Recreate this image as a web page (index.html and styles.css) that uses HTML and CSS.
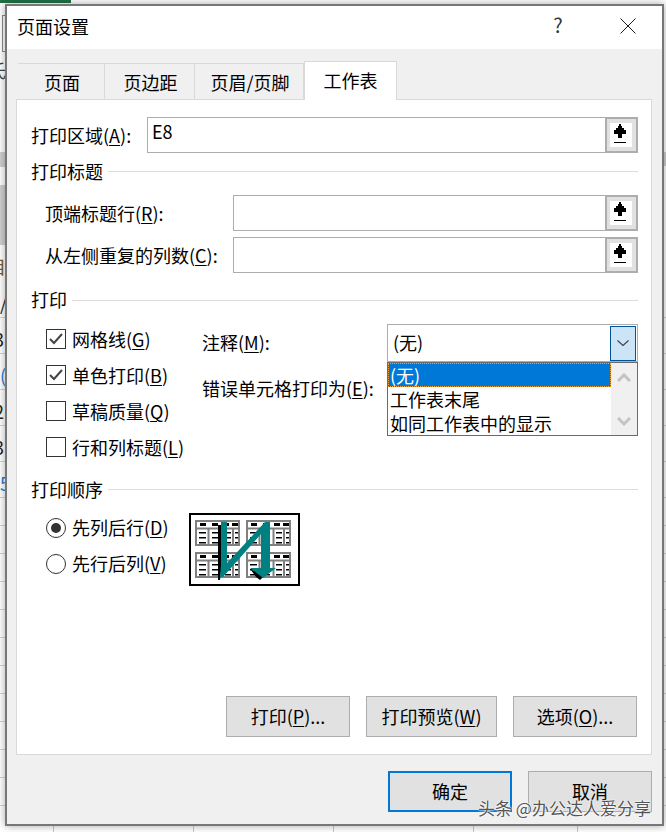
FILE: index.html
```html
<!DOCTYPE html>
<html lang="zh-CN">
<head>
<meta charset="utf-8">
<title>页面设置</title>
<link rel="stylesheet" href="styles.css">
</head>
<body>
<svg class="defs" width="0" height="0" aria-hidden="true">
  <symbol id="refedit" viewBox="0 0 33 36">
    <rect x="1" y="1" width="31" height="34" fill="#e1e1e1" stroke="#adadad" stroke-width="2"/>
    <rect x="5" y="6" width="22" height="24" fill="#fff"/>
    <path d="M14 7h2v2h1v2h2v2h2v4h-4v4h-4v-4H9v-4h2v-2h2V9h1z" fill="#000" shape-rendering="crispEdges"/>
    <rect x="9" y="25" width="12" height="1" fill="#000"/>
  </symbol>
  <symbol id="minitable" viewBox="0 0 45 26">
    <rect x="1" y="1" width="43" height="24" fill="#fff" stroke="#808080" stroke-width="2"/>
    <path d="M1 8.500h43M13.500 8v17M27.500 8v17M38 8v17" stroke="#808080" stroke-width="2" fill="none"/>
    <path d="M5 3h6v3H5zM17 3h6v3h-6zM28 3h6v3h-6zM37 3h6v3h-6z" fill="#000"/>
    <path d="M4 12h7v1.500H4zM4 17h7v1.500H4zM4 22h7v1.500H4zM17 12h7v1.500h-7zM17 17h7v1.500h-7zM17 22h7v1.500h-7zM30 12h6v1.500h-6zM30 17h6v1.500h-6zM30 22h6v1.500h-6zM40 12h3v1.500h-3zM40 17h3v1.500h-3zM40 22h3v1.500h-3z" fill="#000"/>
  </symbol>
</svg>

<div class="sheet">
  <div class="sheet-green"></div>
  <div class="sheet-box"></div>
  <div class="sheet-char">氏</div>
  <div class="sheet-char cell-char">目</div>
  <div class="sheet-band band-a"></div>
  <div class="sheet-band band-b"></div>
  <div class="sheet-band band-c"></div>
  <div class="sheet-rows">
    <div class="sheet-row"><span class="frag">/</span></div>
    <div class="sheet-row"><span class="frag cut">3</span></div>
    <div class="sheet-row"><span class="frag blue">(</span></div>
    <div class="sheet-row"><span class="frag cut">2</span></div>
    <div class="sheet-row"><span class="frag cut">3</span></div>
    <div class="sheet-row"><span class="frag blue">5/</span></div>
    <div class="sheet-row low"></div><div class="sheet-row low"></div><div class="sheet-row low"></div><div class="sheet-row low"></div><div class="sheet-row low"></div><div class="sheet-row low"></div><div class="sheet-row low"></div><div class="sheet-row low"></div><div class="sheet-row low"></div><div class="sheet-row low"></div><div class="sheet-row low"></div>
  </div>
  <div class="sheet-foot">
    <span class="foot-cell"></span><span class="foot-cell"></span><span class="foot-cell"></span><span class="foot-cell wide"></span><span class="foot-cell"></span><span class="foot-cell"></span>
  </div>
</div>

<div class="dialog">
  <div class="titlebar">
    <span class="title">页面设置</span>
    <span class="help">?</span>
    <svg class="close" width="16" height="16" viewBox="0 0 16 16"><path d="M.5.500l15 15M15.500.500l-15 15" stroke="#1a1a1a" stroke-width="1" fill="none"/></svg>
  </div>
  <div class="body">
    <div class="tabs">
      <div class="tab t1">页面</div>
      <div class="tab t2">页边距</div>
      <div class="tab t3">页眉/页脚</div>
      <div class="tab active">工作表</div>
    </div>
    <div class="panel">
      <div class="field-row">
        <span class="area-label">打印区域(<u>A</u>):</span>
        <div class="input"><span class="input-text">E8</span><svg class="refedit"><use href="#refedit"/></svg></div>
      </div>
      <div class="heading"><span>打印标题</span><i></i></div>
      <div class="field-row sub">
        <span class="title-label">顶端标题行(<u>R</u>):</span>
        <div class="input"><span class="input-text"></span><svg class="refedit"><use href="#refedit"/></svg></div>
      </div>
      <div class="field-row sub second">
        <span class="title-label">从左侧重复的列数(<u>C</u>):</span>
        <div class="input"><span class="input-text"></span><svg class="refedit"><use href="#refedit"/></svg></div>
      </div>
      <div class="heading print-head"><span>打印</span><i></i></div>
      <div class="print-grid">
        <div class="checks">
          <label class="check"><span class="box"><svg width="18" height="18" viewBox="0 0 18 18"><path d="M3 9l4 4 8-9" stroke="#444" stroke-width="2" fill="none"/></svg></span><span>网格线(<u>G</u>)</span></label>
          <label class="check"><span class="box"><svg width="18" height="18" viewBox="0 0 18 18"><path d="M3 9l4 4 8-9" stroke="#444" stroke-width="2" fill="none"/></svg></span><span>单色打印(<u>B</u>)</span></label>
          <label class="check"><span class="box"></span><span>草稿质量(<u>Q</u>)</span></label>
          <label class="check"><span class="box"></span><span>行和列标题(<u>L</u>)</span></label>
        </div>
        <div class="mid-labels">
          <span>注释(<u>M</u>):</span>
          <span>错误单元格打印为(<u>E</u>):</span>
        </div>
        <div class="combo">
          <span class="combo-text">(无)</span>
          <span class="combo-btn"><svg width="12" height="6" viewBox="0 0 12 6"><path d="M.5.500L6 5.500l5.500-5" stroke="#444" stroke-width="1.200" fill="none"/></svg></span>
          <div class="droplist">
            <div class="options">
              <div class="option selected">(无)</div>
              <div class="option">工作表末尾</div>
              <div class="option">如同工作表中的显示</div>
            </div>
            <div class="scroll">
              <svg width="14" height="9" viewBox="0 0 14 9"><path d="M1 8l6-6 6 6" stroke="#c4c4c4" stroke-width="3" fill="none"/></svg>
              <svg width="14" height="9" viewBox="0 0 14 9"><path d="M1 1l6 6 6-6" stroke="#c4c4c4" stroke-width="3" fill="none"/></svg>
            </div>
          </div>
        </div>
      </div>
      <div class="heading order-head"><span>打印顺序</span><i></i></div>
      <div class="order-row">
        <div class="radios">
          <label class="radio"><span class="dot on"></span><span>先列后行(<u>D</u>)</span></label>
          <label class="radio"><span class="dot"></span><span>先行后列(<u>V</u>)</span></label>
        </div>
        <svg class="order-pic" width="111" height="73" viewBox="0 0 111 73">
          <rect x="1" y="1" width="109" height="71" fill="#fff" stroke="#000" stroke-width="2"/>
          <use href="#minitable" x="6" y="7" width="45" height="26"/>
          <use href="#minitable" x="57" y="7" width="45" height="26"/>
          <use href="#minitable" x="6" y="39" width="45" height="26"/>
          <use href="#minitable" x="57" y="39" width="45" height="26"/>
          <path d="M29 12h3v47l-1 8h-2z" fill="#000"/>
          <path d="M72 18h4v42h-4zM62 57l5 1 7 6-3 3-4-3z" fill="#000"/>
          <path d="M32 9h6v41L76 9h5v46h6L74 65 61 55h11V21L34 64h-3l1-12z" fill="#008080"/>
        </svg>
      </div>
      <div class="panel-actions">
        <button class="btn">打印(<u>P</u>)...</button>
        <button class="btn preview">打印预览(<u>W</u>)</button>
        <button class="btn">选项(<u>O</u>)...</button>
      </div>
    </div>
    <div class="footer">
      <button class="btn default">确定</button>
      <button class="btn">取消</button>
    </div>
  </div>
</div>
<div class="watermark">头条 @办公达人爱分享</div>
</body>
</html>
```
FILE: styles.css
```css
* { box-sizing: border-box; }
html, body { margin: 0; padding: 0; }
body {
  width: 666px;
  height: 832px;
  overflow: hidden;
  position: relative;
  background: #fff;
  font-family: "Noto Sans CJK SC", "Noto Sans", sans-serif;
  font-size: 18px;
  color: #000;
}
u { text-underline-offset: 2px; text-decoration-thickness: 1px; }
.defs { position: absolute; }

/* spreadsheet behind the dialog */
.sheet { position: absolute; inset: 0; overflow: hidden; }
.sheet-green { position: absolute; left: 0; top: 0; width: 71px; height: 3px; background: #217346; }
.sheet-box { position: absolute; left: 2px; top: 15px; width: 6px; height: 37px; border: 1px solid #8a8a8a; }
.sheet-char { position: absolute; left: -12px; top: 58px; font-size: 18px; line-height: 24px; color: #444; }
.cell-char { top: 254px; color: #7a5a20; }
.sheet-band { position: absolute; background: #d0d0d0; }
.band-a { left: 0; top: 152px; width: 8px; height: 15px; }
.band-b { left: 0; top: 185px; width: 8px; height: 60px; }
.band-c { right: 0; top: 152px; width: 8px; height: 14px; }
.sheet-rows { position: absolute; left: 0; right: 0; top: 282px; display: flex; flex-direction: column; }
.sheet-row { height: 36px; border-bottom: 1px solid #d4d4d4; padding-top: 9px; line-height: 24px; color: #222; }
.sheet-row.low { height: 28px; padding-top: 0; }
.frag { display: block; }
.frag.cut { margin-left: -6px; }
.frag.blue { color: #1f7fd0; }
.sheet-foot { position: absolute; left: 0; right: 0; top: 826px; height: 6px; display: flex; padding-left: 53px; }
.foot-cell { width: 140px; height: 6px; border-left: 1px solid #c8c8c8; flex: none; }
.foot-cell.wide { width: 104px; }

/* dialog window */
.dialog {
  position: absolute;
  left: 5px;
  top: 4px;
  width: 659px;
  height: 822px;
  border: 2px solid #777;
  background: #f0f0f0;
  display: flex;
  flex-direction: column;
  box-shadow: 0 0 8px rgba(0, 0, 0, .35);
}
.titlebar {
  height: 43px;
  flex: none;
  background: #fff;
  display: flex;
  align-items: center;
  padding-left: 10px;
}
.title { line-height: 24px; padding-bottom: 4px; flex: 1; }
.help { width: 20px; text-align: center; font-size: 20px; line-height: 24px; padding-bottom: 6px; color: #333; margin-right: 52px; }
.close { margin-right: 26px; margin-top: -4px; }

.body { flex: 1; display: flex; flex-direction: column; min-height: 0; }
.tabs { display: flex; align-items: flex-end; height: 38px; margin: 12px 0 0 11px; position: relative; z-index: 1; }
.tab {
  height: 36px;
  background: #f0f0f0;
  border-top: 1px solid #d9d9d9;
  border-right: 1px solid #d9d9d9;
  display: flex;
  align-items: center;
  justify-content: center;
  padding: 1px 0 0 2px;
}
.t1 { width: 87px; }
.t2 { width: 90px; }
.t3 { width: 109px; }
.tab.active {
  width: 93px;
  height: 39px;
  margin-bottom: -1px;
  background: #fff;
  border: 1px solid #d9d9d9;
  border-bottom: none;
  padding: 0 0 3px 0;
}
.panel {
  width: 636px;
  height: 656px;
  flex: none;
  margin-left: 9px;
  background: #fff;
  border: 1px solid #d9d9d9;
  padding: 17px 13px 17px 14px;
  display: flex;
  flex-direction: column;
}
.field-row { display: flex; align-items: center; height: 36px; }
.field-row.sub { padding-left: 14px; }
.field-row.second { margin-top: 6px; }
.area-label { width: 116px; padding-bottom: 1px; }
.title-label { width: 188px; padding-bottom: 1px; }
.input {
  flex: 1;
  height: 36px;
  border: 1px solid #adadad;
  border-right: none;
  display: flex;
  align-items: stretch;
  position: relative;
}
.input-text { flex: 1; padding: 0 0 8px 4px; line-height: 27px; }
.refedit { width: 33px; height: 36px; margin: -1px 0; flex: none; }

.heading { display: flex; align-items: center; height: 24px; margin-top: 6px; margin-bottom: 12px; }
.heading span { flex: none; margin-right: 5px; }
.heading i { flex: 1; height: 1px; background: #dcdcdc; }
.print-head { margin-top: 15px; margin-bottom: 12px; }
.print-head span { padding-bottom: 2px; }
.order-head { margin-top: 0; margin-bottom: 12px; }

.print-grid { display: flex; height: 153px; }
.checks { width: 171px; padding: 5px 0 0 15px; display: flex; flex-direction: column; gap: 16px; }
.check { display: flex; align-items: center; gap: 6px; height: 20px; white-space: nowrap; }
.box { width: 20px; height: 20px; border: 1px solid #333; flex: none; display: flex; align-items: center; justify-content: center; }
.mid-labels { width: 185px; padding-top: 6px; display: flex; flex-direction: column; gap: 22px; line-height: 24px; white-space: nowrap; }

.combo {
  width: 251px;
  height: 38px;
  border: 1px solid #adadad;
  position: relative;
  display: flex;
  align-items: center;
  padding-left: 5px;
}
.combo-text { flex: 1; padding-bottom: 2px; }
.combo-btn {
  width: 26px;
  height: 35px;
  margin-right: 1px;
  background: #cce4f7;
  border: 1px solid #005499;
  display: flex;
  align-items: center;
  justify-content: center;
}
.droplist {
  position: absolute;
  left: -1px;
  top: 37px;
  width: 251px;
  height: 74px;
  background: #fff;
  border: 1px solid #6b6b6b;
  display: flex;
}
.options { flex: 1; display: flex; flex-direction: column; }
.option { height: 24px; line-height: 24px; padding-left: 2px; white-space: nowrap; }
.option.selected { background: #0078d7; color: #fff; outline: 1px dotted #f7a13a; outline-offset: -1px; }
.scroll { width: 26px; background: #f0f0f0; display: flex; flex-direction: column; align-items: center; justify-content: space-between; padding: 10px 0 9px; }

.order-row { display: flex; }
.radios { width: 158px; padding: 5px 0 0 15px; display: flex; flex-direction: column; gap: 16px; }
.radio { display: flex; align-items: center; gap: 6px; height: 20px; white-space: nowrap; }
.radio span:last-child { padding-bottom: 2px; }
.dot { width: 20px; height: 20px; border: 1px solid #333; border-radius: 50%; flex: none; display: flex; align-items: center; justify-content: center; }
.dot.on::after { content: ""; width: 10px; height: 10px; border-radius: 50%; background: #333; }
.order-pic { flex: none; }

.btn {
  width: 124px;
  height: 41px;
  font: inherit;
  color: #000;
  background: #e1e1e1;
  border: 1px solid #adadad;
  border-radius: 0;
  padding: 0 0 2px;
}
.panel-actions { margin-top: auto; margin-right: 1px; display: flex; justify-content: flex-end; gap: 16px; }
.btn.preview { width: 131px; }
.footer { display: flex; justify-content: flex-end; gap: 16px; margin-top: 16px; padding-right: 10px; }
.btn.default { border: 2px solid #0078d7; }

.watermark {
  position: absolute;
  left: 478px;
  top: 796px;
  font-size: 17px;
  line-height: 24px;
  white-space: nowrap;
  color: #555;
  text-shadow: 0 0 2px #fff, 0 0 2px #fff, 0 0 1px #fff;
}
```
